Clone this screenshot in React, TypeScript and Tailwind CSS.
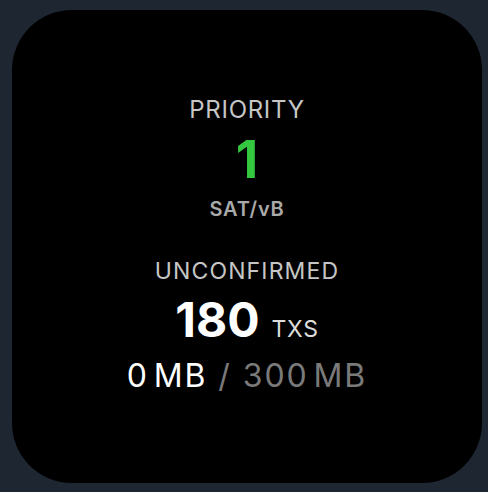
import React from 'react';

// mempool stats card
const App: React.FC = () => {
  return (
    <div className="w-[488px] h-[492px] bg-[#1d2631] pl-[12px] pr-[6px] pt-[10px] pb-[9px]" style={{ fontFamily: 'Inter, "Liberation Sans", sans-serif' }}>
      <div className="w-full h-full bg-black rounded-[60px] flex flex-col items-center justify-center pb-[4px] text-center">
        {/* priority fee */}
        <div className="text-[24px] leading-none tracking-[0.03em] text-[#c6c6c6]">PRIORITY</div>
        <div className="mt-[12px] text-[52px] leading-none font-bold text-[#33c83f]">1</div>
        <div className="mt-[13px] text-[20px] leading-none font-semibold text-[#a9a9a9] tracking-[0.04em]">SAT/vB</div>

        {/* mempool */}
        <div className="mt-[41px] text-[23px] leading-none tracking-[0.05em] text-[#c6c6c6]">UNCONFIRMED</div>
        <div className="mt-[13px] flex items-baseline gap-[12px] leading-none">
          <span className="text-[48px] font-bold text-white">180</span>
          <span className="text-[23px] text-[#dcdcdc] tracking-[0.03em]">TXS</span>
        </div>
        <div className="mt-[16px] text-[32px] leading-none tracking-[0.06em]">
          <span className="text-white">0&#8202;MB</span>
          <span className="text-[#7a7a7a]"> / 300&#8202;MB</span>
        </div>
      </div>
    </div>
  );
};

export default App;
